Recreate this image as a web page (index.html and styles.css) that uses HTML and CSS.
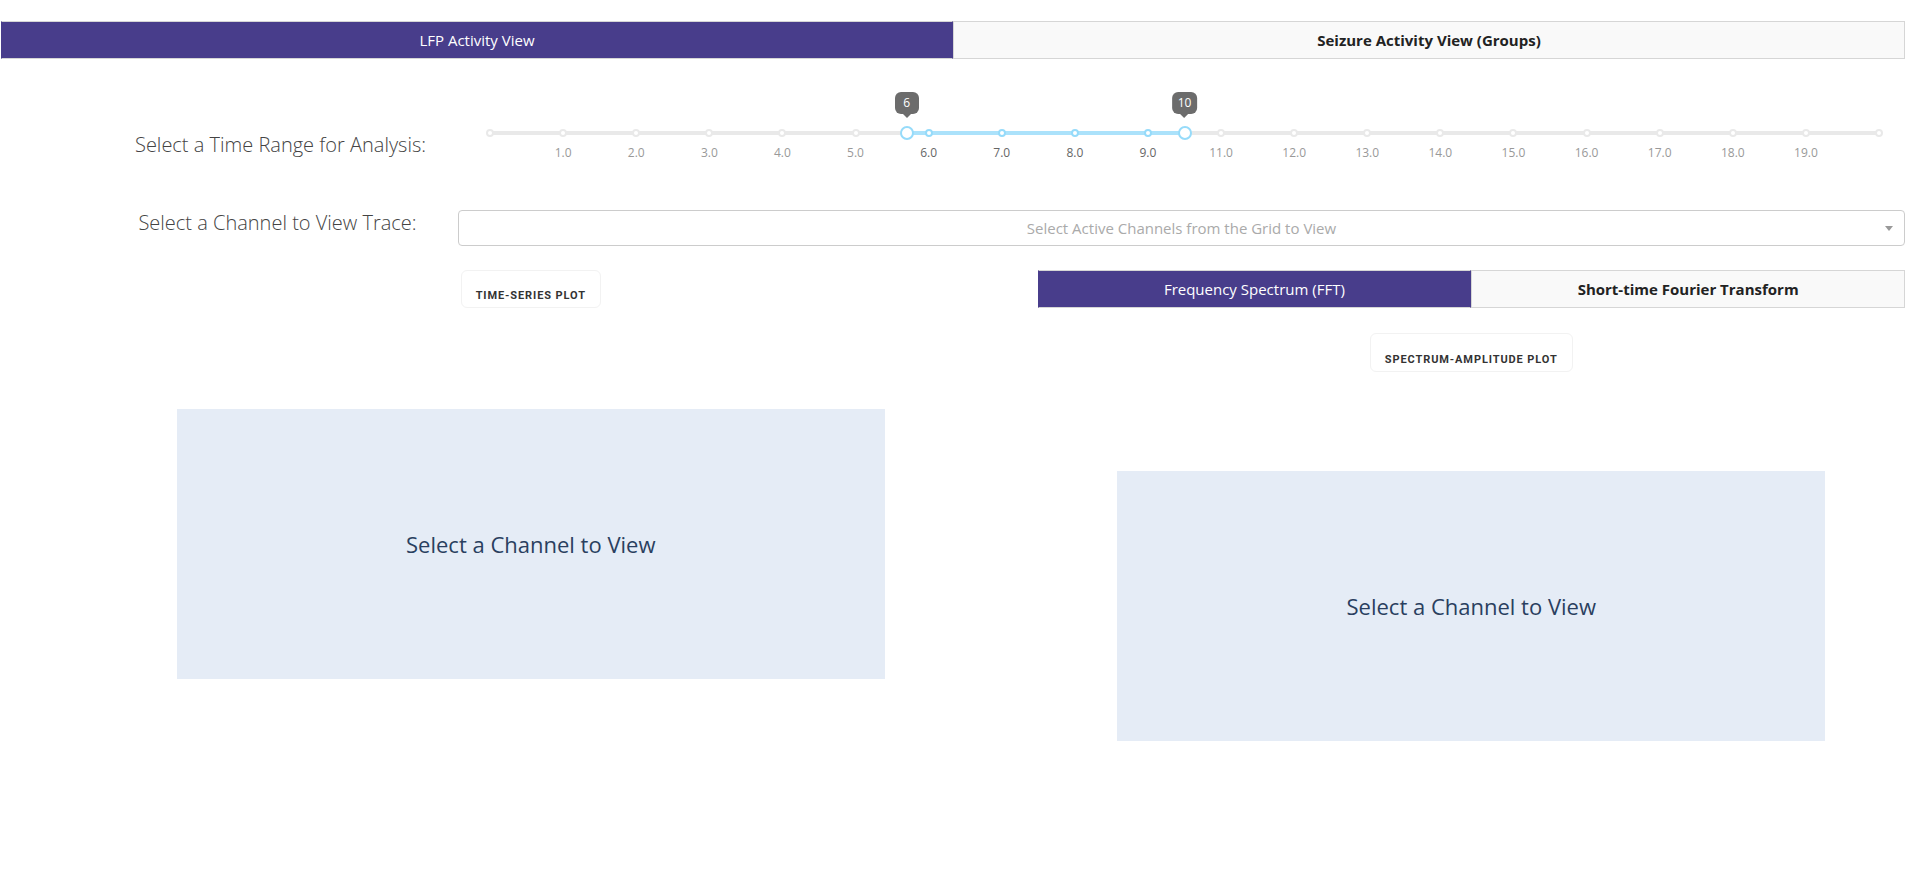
FILE: index.html
```html
<!DOCTYPE html>
<html>
<head>
<meta charset="utf-8">
<link rel="stylesheet" href="styles.css">
</head>
<body>
<div class="page">
  <div class="tabs top-tabs">
    <div class="tab active">LFP Activity View</div>
    <div class="tab">Seizure Activity View (Groups)</div>
  </div>

  <div class="row slider-row">
    <div class="row-label slider-label">Select a Time Range for Analysis:</div>
    <div class="slider-wrap">
      <div class="slider">
        <div class="rail"></div>
        <div class="track" style="left:30%;width:20%"></div>
        <span class="dot" style="left:0%"></span>
        <span class="dot" style="left:5.2632%"></span>
        <span class="dot" style="left:10.5263%"></span>
        <span class="dot" style="left:15.7895%"></span>
        <span class="dot" style="left:21.0526%"></span>
        <span class="dot" style="left:26.3158%"></span>
        <span class="dot on" style="left:31.5789%"></span>
        <span class="dot on" style="left:36.8421%"></span>
        <span class="dot on" style="left:42.1053%"></span>
        <span class="dot on" style="left:47.3684%"></span>
        <span class="dot" style="left:52.6316%"></span>
        <span class="dot" style="left:57.8947%"></span>
        <span class="dot" style="left:63.1579%"></span>
        <span class="dot" style="left:68.4211%"></span>
        <span class="dot" style="left:73.6842%"></span>
        <span class="dot" style="left:78.9474%"></span>
        <span class="dot" style="left:84.2105%"></span>
        <span class="dot" style="left:89.4737%"></span>
        <span class="dot" style="left:94.7368%"></span>
        <span class="dot" style="left:100%"></span>
        <div class="handle" style="left:30%"><div class="tip">6</div></div>
        <div class="handle" style="left:50%"><div class="tip">10</div></div>
        <span class="mark" style="left:5.2632%">1.0</span>
        <span class="mark" style="left:10.5263%">2.0</span>
        <span class="mark" style="left:15.7895%">3.0</span>
        <span class="mark" style="left:21.0526%">4.0</span>
        <span class="mark" style="left:26.3158%">5.0</span>
        <span class="mark on" style="left:31.5789%">6.0</span>
        <span class="mark on" style="left:36.8421%">7.0</span>
        <span class="mark on" style="left:42.1053%">8.0</span>
        <span class="mark on" style="left:47.3684%">9.0</span>
        <span class="mark" style="left:52.6316%">11.0</span>
        <span class="mark" style="left:57.8947%">12.0</span>
        <span class="mark" style="left:63.1579%">13.0</span>
        <span class="mark" style="left:68.4211%">14.0</span>
        <span class="mark" style="left:73.6842%">15.0</span>
        <span class="mark" style="left:78.9474%">16.0</span>
        <span class="mark" style="left:84.2105%">17.0</span>
        <span class="mark" style="left:89.4737%">18.0</span>
        <span class="mark" style="left:94.7368%">19.0</span>
      </div>
    </div>
  </div>

  <div class="row dropdown-row">
    <div class="row-label channel-label">Select a Channel to View Trace:</div>
    <div class="dropdown">
      <span></span>
      <span class="placeholder">Select Active Channels from the Grid to View</span>
      <span class="caret-cell"><span class="caret"></span></span>
    </div>
  </div>

  <div class="plots">
    <div class="col">
      <div class="card-title">TIME-SERIES PLOT</div>
      <div class="plot plot-left">Select a Channel to View</div>
    </div>
    <div class="col">
      <div class="tabs sub-tabs">
        <div class="tab active">Frequency Spectrum (FFT)</div>
        <div class="tab">Short-time Fourier Transform</div>
      </div>
      <div class="card-title spectrum-title">SPECTRUM-AMPLITUDE PLOT</div>
      <div class="plot plot-right">Select a Channel to View</div>
    </div>
  </div>
</div>
</body>
</html>
```

FILE: styles.css
```css
html, body {
  margin: 0;
  padding: 0;
  background: #ffffff;
}

body {
  font-family: "Open Sans", "Liberation Sans", sans-serif;
  color: #333;
}

.page {
  padding: 0 8px 0 0;
}

/* Tabs */
.tabs {
  display: flex;
}

.top-tabs {
  margin: 21px 0 0 1px;
}

.tab {
  flex: 1;
  box-sizing: border-box;
  height: 38px;
  display: flex;
  align-items: center;
  justify-content: center;
  border: 1px solid #d6d6d6;
  background: #f9f9f9;
  font-size: 15px;
  font-weight: 700;
  color: #222;
}

.tab.active {
  background: #483d8b;
  border-color: #d6d6d6 #483d8b;
  color: #ffffff;
  font-weight: 400;
}

/* Rows */
.row {
  display: flex;
  margin-left: 97px;
}

.row-label {
  font-size: 20px;
  font-weight: 300;
  line-height: 26px;
  color: #444;
  text-align: center;
  flex: none;
}

.slider-row {
  margin-top: 26px;
}

.slider-label {
  width: 367px;
  margin-top: 47px;
}

.slider-wrap {
  flex: 1;
  padding: 0 26px;
}

.slider {
  position: relative;
  height: 80px;
}

.rail {
  position: absolute;
  left: 0;
  right: 0;
  top: 46px;
  height: 4px;
  border-radius: 2px;
  background: #e9e9e9;
}

.track {
  position: absolute;
  top: 46px;
  height: 4px;
  background: #abe2fb;
}

.dot {
  position: absolute;
  top: 44px;
  width: 8px;
  height: 8px;
  box-sizing: border-box;
  margin-left: -4px;
  border: 2px solid #e9e9e9;
  border-radius: 50%;
  background: #fff;
}

.dot.on {
  border-color: #96dbfa;
}

.handle {
  position: absolute;
  top: 41px;
  width: 14px;
  height: 14px;
  box-sizing: border-box;
  margin-left: -7px;
  border: 2px solid #96dbfa;
  border-radius: 50%;
  background: #fff;
}

.tip {
  position: absolute;
  bottom: calc(100% + 14px);
  left: 50%;
  transform: translateX(-50%);
  min-width: 24px;
  height: 22px;
  box-sizing: border-box;
  padding: 0 6px;
  border-radius: 6px;
  background: #6c6c6c;
  color: #fff;
  font-size: 12px;
  line-height: 22px;
  text-align: center;
}

.tip::after {
  content: "";
  position: absolute;
  left: 50%;
  top: 100%;
  margin-left: -4px;
  border-style: solid;
  border-width: 4px 4px 0 4px;
  border-color: #6c6c6c transparent transparent transparent;
}

.mark {
  position: absolute;
  top: 60px;
  transform: translateX(-50%);
  font-size: 12px;
  line-height: 16px;
  color: #999;
  white-space: nowrap;
}

.mark.on {
  color: #666;
}

/* Dropdown */
.dropdown-row {
  margin-top: 45px;
}

.channel-label {
  width: 361px;
  padding-top: 0;
}

.dropdown {
  flex: 1;
  height: 36px;
  box-sizing: border-box;
  border: 1px solid #ccc;
  border-radius: 4px;
  background: #fff;
  display: grid;
  grid-template-columns: 30px 1fr 30px;
  align-items: center;
}

.placeholder {
  text-align: center;
  color: #aaa;
  font-size: 15px;
}

.caret-cell {
  display: flex;
  justify-content: center;
  align-items: center;
}

.caret {
  width: 0;
  height: 0;
  border-style: solid;
  border-width: 5px 4px 0 4px;
  border-color: #999 transparent transparent transparent;
}

/* Plots */
.plots {
  margin: 24px 0 0 97px;
  display: grid;
  grid-template-columns: 1fr 1fr;
  column-gap: 73px;
}

.col {
  display: flex;
  flex-direction: column;
  align-items: center;
}

.sub-tabs {
  width: 100%;
}

.card-title {
  box-sizing: border-box;
  padding: 18px 14px 4px;
  border: 1px solid #f2f2f2;
  border-radius: 6px;
  background: #fff;
  font-family: Roboto, "Liberation Sans", sans-serif;
  font-size: 11px;
  font-weight: 700;
  letter-spacing: 0.9px;
  line-height: 14px;
  color: #333;
  white-space: nowrap;
}

.spectrum-title {
  margin-top: 25px;
  padding-top: 19px;
}

.plot {
  width: 708px;
  height: 270px;
  background: #e5ecf6;
  color: #2a3f5f;
  font-size: 22px;
  font-weight: 400;
  display: flex;
  align-items: center;
  justify-content: center;
}

.plot-left {
  margin-top: 101px;
}

.plot-right {
  margin-top: 99px;
}
```
